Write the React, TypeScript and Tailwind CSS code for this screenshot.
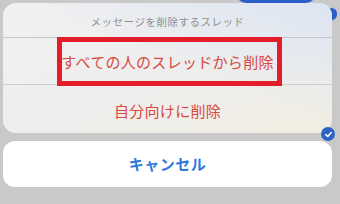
import React from "react";

export default function App() {
  const font = { fontFamily: '"Noto Sans CJK JP", "Noto Sans", sans-serif' };
  return (
    <div
      className="relative w-[340px] h-[204px] overflow-hidden bg-[#c9c9c9] pl-[3px] pr-[8px] pt-[3px] flex flex-col gap-[8px]"
      style={font}
    >
      {/* background chat bits */}
      <div className="absolute left-[236px] top-[-20px] w-[80px] h-[23px] rounded-b-[10px] bg-[#2a5ec9]" />
      <div className="absolute left-[326px] top-[8px] w-[11px] h-[12px] rounded-full bg-[#2a5ec9]" />

      <div className="relative z-10 h-[130px] rounded-[13px] bg-gradient-to-br from-[#f1f1f1] via-[#eeeeee] to-[#f2eee2] flex flex-col overflow-hidden">
        <div className="absolute inset-0 bg-gradient-to-bl from-[#dbe4f3] via-transparent to-transparent opacity-90" />
        <div className="relative h-[35px] flex items-center justify-center pt-[3px] border-b border-[#c8c8c8] text-[10.5px] text-[#8f8f8f] tracking-[0.5px]">
          メッセージを削除するスレッド
        </div>
        <div className="relative h-[47px] flex items-center justify-center pt-[2px] border-b border-[#cfcfcf] text-[15px] text-[#d9493f] tracking-[0.3px]">
          すべての人のスレッドから削除
        </div>
        <div className="relative flex-1 flex items-center justify-center text-[15px] text-[#d9493f] tracking-[0.3px] pt-[4px]">
          自分向けに削除
        </div>
        <div className="absolute left-[54px] top-[34px] w-[225px] h-[49px] border-[5px] border-[#e31e2a]" />
      </div>

      <div className="relative z-10 h-[46px] rounded-[12px] bg-white flex items-center justify-center text-[15px] font-bold text-[#2f78dc] tracking-[0.5px]">
        キャンセル
      </div>

      {/* check badge */}
      <div className="absolute z-20 left-[321px] top-[127px] w-[14px] h-[14px] rounded-full bg-[#2d62c4] flex items-center justify-center">
        <svg width="9" height="9" viewBox="0 0 10 10">
          <path d="M2 5.2 L4.2 7.2 L8 2.8" fill="none" stroke="white" strokeWidth="1.8" strokeLinecap="round" strokeLinejoin="round" />
        </svg>
      </div>
    </div>
  );
}
